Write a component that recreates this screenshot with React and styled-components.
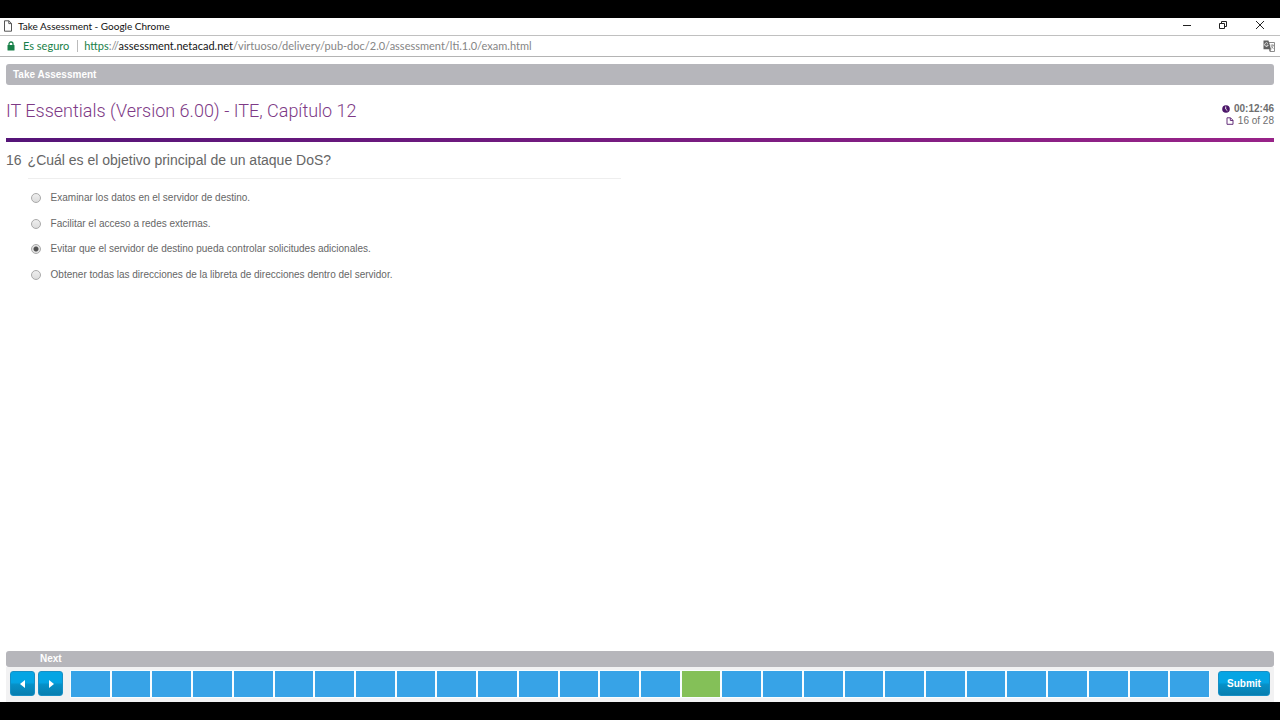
import React, { useState } from "react";
import styled, { createGlobalStyle } from "styled-components";

const GlobalStyle = createGlobalStyle`
  * { box-sizing: border-box; }
  body { margin: 0; background: #000; font-family: "Liberation Sans", Arial, sans-serif; }
`;

const Screen = styled.div`
  display: flex;
  flex-direction: column;
  min-height: 100vh;
  padding: 18px 0;
  background: #000;
`;

const TitleBar = styled.header`
  display: flex;
  align-items: center;
  height: 17px;
  padding: 0 13px 2px 3px;
  gap: 5px;
  background: #fff;
  color: #111;
  font: 10px/14px Lato, sans-serif;
`;

const WindowTitle = styled.span`
  flex: 1;
`;

const WindowControls = styled.div`
  display: flex;
  padding-bottom: 2px;
  gap: 24px;
`;

const WindowButton = styled.button`
  display: flex;
  padding: 0;
  border: 0;
  background: none;
  color: #222;
  svg { display: block; }
`;

const AddressBar = styled.div`
  display: flex;
  align-items: center;
  height: 22px;
  padding: 0 5px 0 6px;
  border-top: 1px solid #c0c0c0;
  border-bottom: 1px solid #b4b4b4;
  background: #fff;
  font: 11px/20px Lato, sans-serif;
`;

const Security = styled.span`
  display: flex;
  align-items: center;
  gap: 7px;
  padding-right: 8px;
  color: #188048;
`;

const Url = styled.span`
  flex: 1;
  padding-left: 7px;
  color: #858585;
  background: linear-gradient(#bbb, #bbb) left center / 1px 12px no-repeat;
`;

const Scheme = styled.span`
  color: #188048;
`;

const Host = styled.span`
  color: #151515;
`;

const Content = styled.main`
  display: flex;
  flex-direction: column;
  flex: 1;
  padding: 7px 6px 0;
  background: #fff;
`;

const Banner = styled.div`
  height: ${(p) => p.$height}px;
  padding-left: ${(p) => p.$indent}px;
  border-radius: 3px;
  background: #b6b6bb;
  color: #fff;
  font-size: 10px;
  font-weight: bold;
  line-height: ${(p) => p.$line}px;
`;

const ExamHeader = styled.div`
  display: flex;
  justify-content: space-between;
  align-items: center;
  height: 53px;
`;

const ExamTitle = styled.h1`
  margin: 0;
  padding-bottom: 2px;
  color: #7e3a86;
  font: 300 18px/24px Roboto, "Liberation Sans", sans-serif;
`;

const Status = styled.div`
  display: flex;
  flex-direction: column;
  align-items: flex-end;
  padding-top: 6px;
  color: #6e6e6e;
  font-size: 10px;
  line-height: 12px;
`;

const StatusRow = styled.div`
  display: flex;
  align-items: center;
  gap: 4px;
  font-weight: ${(p) => (p.$strong ? "bold" : "normal")};
`;

const Divider = styled.hr`
  width: 100%;
  height: 4px;
  margin: 0;
  border: 0;
  background: linear-gradient(90deg, #551478, #982388);
`;

const Question = styled.fieldset`
  display: flex;
  gap: 6px;
  min-width: 0;
  margin: 0;
  padding: 8px 0 0;
  border: 0;
  color: #666;
`;

const QuestionNumber = styled.span`
  font-size: 14px;
  line-height: 21px;
`;

const QuestionBody = styled.div`
  flex: 0 1 593px;
`;

const QuestionText = styled.h2`
  margin: 0;
  padding-bottom: 7px;
  border-bottom: 1px solid #eee;
  font-size: 14px;
  font-weight: normal;
  line-height: 21px;
`;

const Options = styled.div`
  display: grid;
  grid-template-rows: 26px 25px 26px 25px;
  padding: 6px 0 0 3px;
`;

const Option = styled.label`
  display: flex;
  align-items: center;
  gap: 10px;
  font-size: 10px;
  line-height: 14px;
`;

const Radio = styled.input`
  appearance: none;
  width: 10px;
  height: 10px;
  margin: 0;
  border: 1px solid #a9a9a9;
  border-radius: 50%;
  background: linear-gradient(#eee, #dcdcdc);
  &:checked {
    background: radial-gradient(circle, #505050 0 2px, #e2e2e2 3px);
  }
`;

const Footer = styled.footer`
  padding: 0 6px;
  background: #fff;
`;

const Navigation = styled.nav`
  display: flex;
  align-items: center;
  height: 35px;
  padding: 0 4px 2px;
  background: #f2f2f3;
`;

const ActionButton = styled.button`
  display: flex;
  align-items: center;
  justify-content: center;
  width: ${(p) => (p.$wide ? 52 : 25)}px;
  height: 25px;
  padding: 0;
  border: 1px solid #168fc5;
  border-radius: 3px;
  background: linear-gradient(#05a5e4 0 45%, #0790c7 55%, #087eaf);
  color: #fff;
  font: bold 10px/14px "Liberation Sans", Arial, sans-serif;
`;

const Arrows = styled.div`
  display: flex;
  gap: 3px;
`;

const Cells = styled.div`
  display: grid;
  grid-template-columns: repeat(28, 1fr);
  gap: 2px;
  flex: 1;
  margin: 0 9px 0 8px;
`;

const Cell = styled.button`
  height: 26px;
  min-width: 0;
  padding: 0;
  border: 0;
  background: ${(p) => (p.$current ? "#84c058" : "#37a3e7")};
  box-shadow: 0 0 0 1px #f8fdff;
`;

const answers = [
  "Examinar los datos en el servidor de destino.",
  "Facilitar el acceso a redes externas.",
  "Evitar que el servidor de destino pueda controlar solicitudes adicionales.",
  "Obtener todas las direcciones de la libreta de direcciones dentro del servidor.",
];

const PageIcon = () => (
  <svg width="10" height="12" viewBox="0 0 10 12" fill="#fff" stroke="#555">
    <path d="M1.5.8h4.4l2.6 2.6v7.8h-7zM5.8.8v2.8h2.7" />
  </svg>
);

const LockIcon = () => (
  <svg width="10" height="10" viewBox="0 0 10 10">
    <path d="M3 5V3a2 2 0 0 1 4 0v2" fill="none" stroke="#188048" strokeWidth="1.3" />
    <rect x="1.5" y="4" width="7" height="5.5" rx=".6" fill="#188048" />
  </svg>
);

const TranslateIcon = () => (
  <svg width="12" height="12" viewBox="0 0 12 12">
    <path d="M5.5 2.5h6v9H7z" fill="#fff" stroke="#8c8c8c" />
    <path d="M.5.5h5L8 9.2H.5z" fill="#606060" />
    <path d="M5 3.6A1.8 1.8 0 1 0 5.2 5.2H3.6" fill="none" stroke="#eee" strokeWidth=".9" />
    <path d="M7.5 5.2H11M9.2 4.3v.9M10.3 5.2c-.3 1.5-1 2.5-2 3.3M8.3 6.2c.5 1.1 1.2 1.9 2.3 2.4M6.5 9.5 8 9.2 7 11.2z" fill="none" stroke="#777" strokeWidth=".7" />
  </svg>
);

const ClockIcon = () => (
  <svg width="8" height="8" viewBox="0 0 8 8">
    <circle cx="4" cy="4" r="3.8" fill="#4c1769" />
    <path d="M3.7 1.5v2.6l1.7 1.6" fill="none" stroke="#fff" strokeWidth=".9" />
  </svg>
);

const SheetIcon = () => (
  <svg width="8" height="8" viewBox="0 0 8 8" fill="none" stroke="#65307b">
    <path d="M1 .8h3.5L7 3.3v4H1zM4.3.8v2.7H7" />
  </svg>
);

const Arrow = ({ next }) => (
  <svg width="8" height="8" viewBox="0 0 8 8" fill="#fff">
    <path d={next ? "M2 0v8l5-4z" : "M6 0v8L1 4z"} />
  </svg>
);

export default function App() {
  const [selected, setSelected] = useState(2);
  return (
    <Screen>
      <GlobalStyle />
      <TitleBar>
        <PageIcon />
        <WindowTitle>Take Assessment - Google Chrome</WindowTitle>
        <WindowControls>
          <WindowButton aria-label="Minimize">
            <svg width="12" height="12" viewBox="0 0 12 12" stroke="currentColor"><path d="M2 6.5h8" /></svg>
          </WindowButton>
          <WindowButton aria-label="Restore">
            <svg width="12" height="12" viewBox="0 0 12 12" fill="none" stroke="currentColor"><path d="M2.5 4.5h5v5h-5zM4.5 4.5v-2h5v5h-2" /></svg>
          </WindowButton>
          <WindowButton aria-label="Close">
            <svg width="14" height="12" viewBox="0 0 14 12" stroke="currentColor"><path d="m3 2 8 8m0-8-8 8" /></svg>
          </WindowButton>
        </WindowControls>
      </TitleBar>
      <AddressBar>
        <Security><LockIcon />Es seguro</Security>
        <Url><Scheme>https</Scheme>://<Host>assessment.netacad.net</Host>/virtuoso/delivery/pub-doc/2.0/assessment/lti.1.0/exam.html</Url>
        <TranslateIcon />
      </AddressBar>
      <Content>
        <Banner $height={21} $indent={7} $line={21}>Take Assessment</Banner>
        <ExamHeader>
          <ExamTitle>IT Essentials (Version 6.00) - ITE, Capítulo 12</ExamTitle>
          <Status>
            <StatusRow $strong><ClockIcon />00:12:46</StatusRow>
            <StatusRow><SheetIcon />16 of 28</StatusRow>
          </Status>
        </ExamHeader>
        <Divider />
        <Question aria-labelledby="question">
          <QuestionNumber>16</QuestionNumber>
          <QuestionBody>
            <QuestionText id="question">¿Cuál es el objetivo principal de un ataque DoS?</QuestionText>
            <Options>
              {answers.map((text, i) => (
                <Option key={text}>
                  <Radio type="radio" name="answer" checked={selected === i} onChange={() => setSelected(i)} />
                  {text}
                </Option>
              ))}
            </Options>
          </QuestionBody>
        </Question>
      </Content>
      <Footer>
        <Banner $height={16} $indent={34} $line={15}>Next</Banner>
        <Navigation>
          <Arrows>
            <ActionButton aria-label="Previous"><Arrow /></ActionButton>
            <ActionButton aria-label="Next"><Arrow next /></ActionButton>
          </Arrows>
          <Cells>
            {Array.from({ length: 28 }, (_, i) => (
              <Cell key={i} $current={i === 15} aria-label={`Question ${i + 1}`} />
            ))}
          </Cells>
          <ActionButton $wide>Submit</ActionButton>
        </Navigation>
      </Footer>
    </Screen>
  );
}
